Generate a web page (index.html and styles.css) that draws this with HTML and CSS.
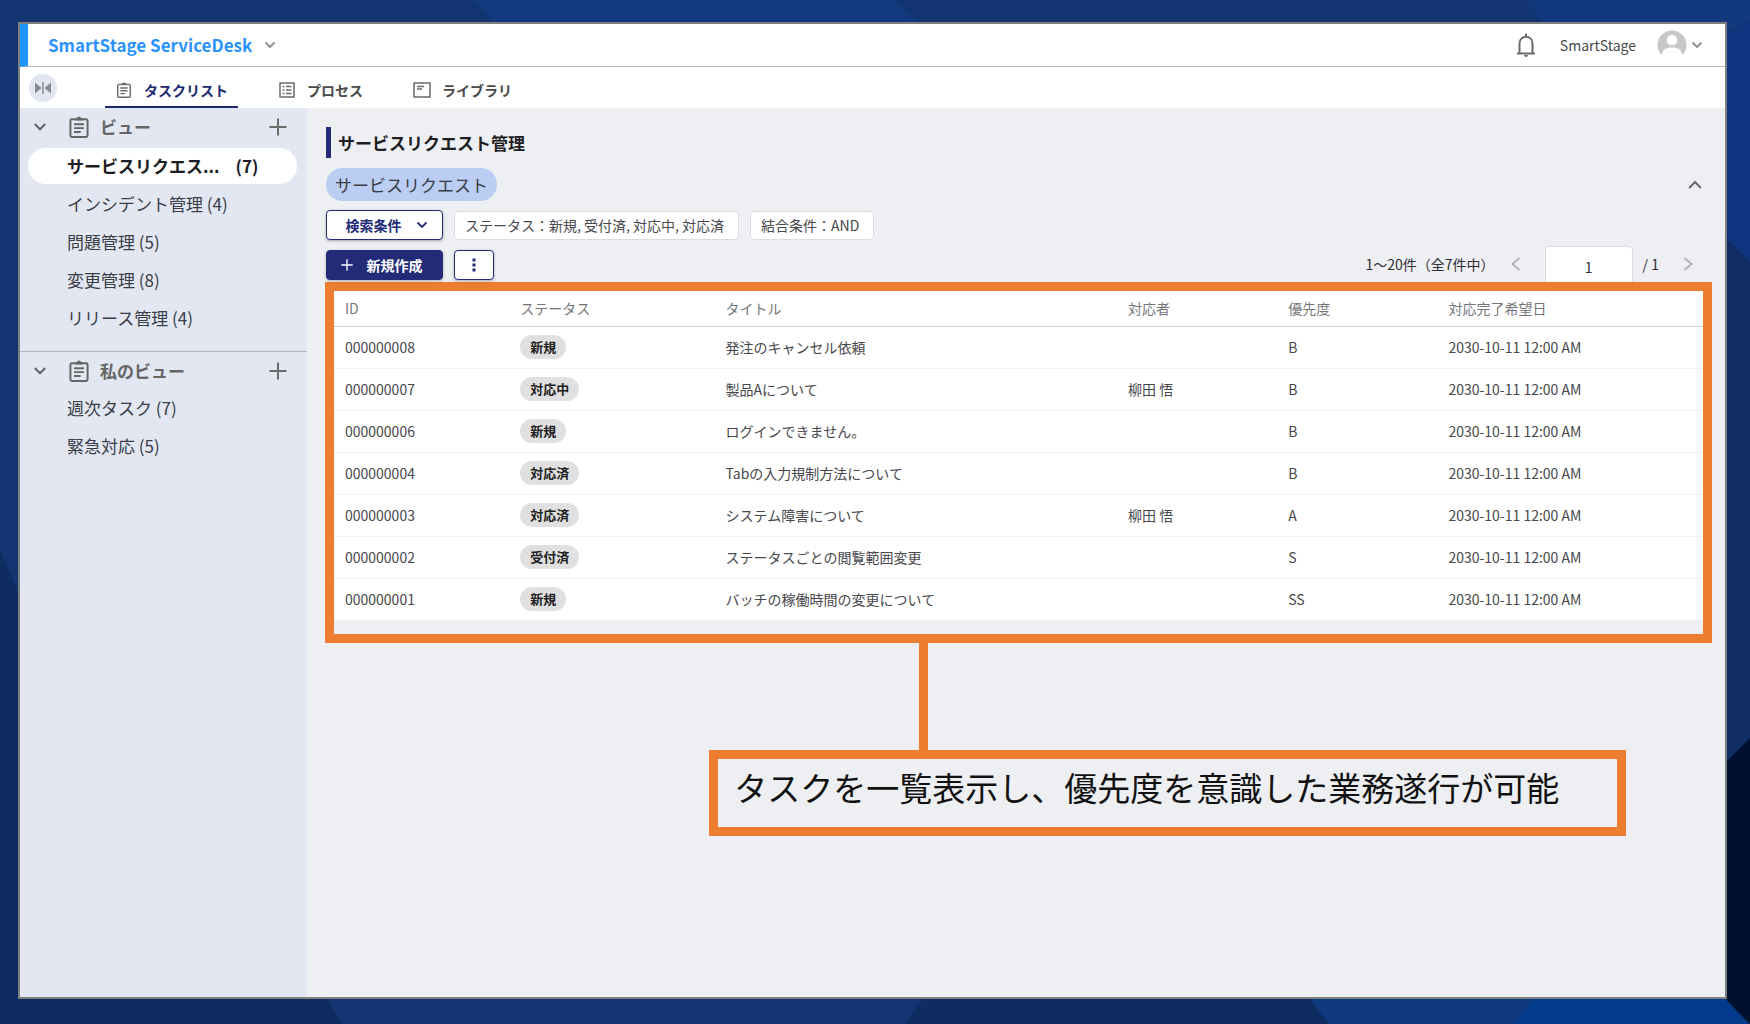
FILE: index.html
```html
<!DOCTYPE html>
<html lang="ja">
<head>
<meta charset="utf-8">
<meta name="viewport" content="width=device-width, initial-scale=1">
<title>SmartStage ServiceDesk</title>
<link rel="stylesheet" href="styles.css">
</head>
<body>
<svg class="backdrop" viewBox="0 0 1750 1024" preserveAspectRatio="none" aria-hidden="true">
  <rect width="1750" height="1024" fill="#123471"/>
  <path d="M475 0H895L925 30H500Z" fill="#123a7e"/>
  <path d="M1525 0H1750V30H1550Z" fill="#12397e"/>
  <path d="M1720 40L1750 20V262L1720 232Z" fill="#10347f"/>
  <path d="M1720 232L1750 262V740L1720 768Z" fill="#0f2d62"/>
  <path d="M1720 768L1750 738V1024L1720 994Z" fill="#001130"/>
  <path d="M0 550L30 620V990H322L342 1024H0Z" fill="#0f2c61"/>
  <path d="M926 995H1306L1330 1024H906Z" fill="#0f2c61"/>
  <path d="M1306 995H1536L1514 1024H1330Z" fill="#103a7f"/>
  <path d="M1536 995H1722L1748 1024H1514Z" fill="#023a8c"/>
</svg>
<svg class="sprite" aria-hidden="true">
  <symbol id="down" viewBox="0 0 12 12"><path d="M1.500 3.500L6 8L10.500 3.500" fill="none" stroke="currentColor" stroke-width="1.800"/></symbol>
  <symbol id="up" viewBox="0 0 12 12"><path d="M1 8.500L6 3.500L11 8.500" fill="none" stroke="currentColor" stroke-width="1.800"/></symbol>
  <symbol id="left" viewBox="0 0 14 14"><path d="M10.500 1L3.500 7L10.500 13" fill="none" stroke="currentColor" stroke-width="2"/></symbol>
  <symbol id="right" viewBox="0 0 14 14"><path d="M3.500 1L10.500 7L3.500 13" fill="none" stroke="currentColor" stroke-width="2"/></symbol>
  <symbol id="plus" viewBox="0 0 18 18"><path d="M9 0.500V17.500M0.500 9H17.500" fill="none" stroke="currentColor" stroke-width="2"/></symbol>
  <symbol id="clipboard" viewBox="0 0 18 20"><path d="M2.500 3H15.500A1.300 1.300 0 0 1 16.800 4.300V17.700A1.300 1.300 0 0 1 15.500 19H2.500A1.300 1.300 0 0 1 1.200 17.700V4.300A1.300 1.300 0 0 1 2.500 3Z" fill="none" stroke="currentColor" stroke-width="1.800"/><path d="M5.500 2H7A2.100 2.100 0 0 1 11 2H12.500V4H5.500Z" fill="currentColor"/><path d="M4.500 7.500H13.500M4.500 11H13.500M4.500 14.500H10.500" stroke="currentColor" stroke-width="1.700"/></symbol>
  <symbol id="list" viewBox="0 0 16 16"><path d="M1 1H15V15H1Z" fill="none" stroke="currentColor" stroke-width="1.500" stroke-linejoin="round"/><path d="M3.500 4.500H5.500M7 4.500H12.500M3.500 8H5.500M7 8H12.500M3.500 11.500H5.500M7 11.500H12.500" stroke="currentColor" stroke-width="1.500"/></symbol>
  <symbol id="reader" viewBox="0 0 18 16"><path d="M1 1H17V15H1Z" fill="none" stroke="currentColor" stroke-width="1.500" stroke-linejoin="round"/><path d="M4 4.500H11M4 7H9" stroke="currentColor" stroke-width="1.500"/></symbol>
</svg>
<div class="window">
  <header class="topbar">
    <button class="product" type="button">SmartStage ServiceDesk <svg class="ic-12"><use href="#down"/></svg></button>
    <div class="account">
      <button class="plain" type="button" aria-label="通知">
        <svg class="bell" viewBox="0 0 20 24" fill="none" stroke="currentColor" stroke-width="2"><path d="M1 20.500H19M3.500 20V10.500C3.500 6.500 6.200 3.800 10 3.800S16.500 6.500 16.500 10.500V20M10 0.500V3.500"/><path d="M8 22A2 2 0 0 0 12 22Z" fill="currentColor" stroke="none"/></svg>
      </button>
      <span class="username">SmartStage</span>
      <button class="plain user" type="button" aria-label="アカウント">
        <svg class="avatar" viewBox="0 0 30 30"><path d="M5 25.500A14.500 14.500 0 1 1 25 25.500C25 20 21 17.500 15 17.500S5 20 5 25.500Z" fill="#c8c8c8"/><circle cx="15" cy="10" r="5.300" fill="#fff"/></svg>
        <svg class="ic-12"><use href="#down"/></svg>
      </button>
    </div>
  </header>
  <nav class="tabs">
    <button class="toggle" type="button" aria-label="サイドバー切替"><svg viewBox="0 0 18 14"><path d="M1 1.500L7.500 7L1 12.500ZM17 1.500L10.500 7L17 12.500ZM8.300 1H9.700V13H8.300Z" fill="#8a8a8c"/></svg></button>
    <a class="tab tab-on" href="#tasks"><svg class="ic-tab"><use href="#clipboard"/></svg>タスクリスト</a>
    <a class="tab" href="#process"><svg class="ic-tab"><use href="#list"/></svg>プロセス</a>
    <a class="tab" href="#library"><svg class="ic-tab"><use href="#reader"/></svg>ライブラリ</a>
  </nav>
  <div class="body">
    <aside class="side">
      <section class="group">
        <h2 class="group-head"><svg class="ic-14"><use href="#down"/></svg><svg class="ic-clip"><use href="#clipboard"/></svg><span class="group-name">ビュー</span><button class="plain" type="button" aria-label="ビューを追加"><svg class="ic-18"><use href="#plus"/></svg></button></h2>
        <ul class="views">
          <li><a class="view view-on" href="#v1"><span>サービスリクエス...</span><span>(7)</span></a></li>
          <li><a class="view" href="#v2">インシデント管理 (4)</a></li>
          <li><a class="view" href="#v3">問題管理 (5)</a></li>
          <li><a class="view" href="#v4">変更管理 (8)</a></li>
          <li><a class="view" href="#v5">リリース管理 (4)</a></li>
        </ul>
      </section>
      <section class="group">
        <h2 class="group-head"><svg class="ic-14"><use href="#down"/></svg><svg class="ic-clip"><use href="#clipboard"/></svg><span class="group-name">私のビュー</span><button class="plain" type="button" aria-label="私のビューを追加"><svg class="ic-18"><use href="#plus"/></svg></button></h2>
        <ul class="views">
          <li><a class="view" href="#m1">週次タスク (7)</a></li>
          <li><a class="view" href="#m2">緊急対応 (5)</a></li>
        </ul>
      </section>
    </aside>
    <main class="main">
      <h1 class="title">サービスリクエスト管理</h1>
      <div class="row category">
        <span class="pill">サービスリクエスト</span>
        <button class="plain" type="button" aria-label="折りたたむ"><svg class="ic-14"><use href="#up"/></svg></button>
      </div>
      <div class="row filters">
        <button class="btn" type="button">検索条件 <svg class="ic-12"><use href="#down"/></svg></button>
        <span class="chip">ステータス：新規, 受付済, 対応中, 対応済</span>
        <span class="chip">結合条件：AND</span>
      </div>
      <div class="row toolbar">
        <button class="btn btn-primary" type="button"><svg class="ic-12"><use href="#plus"/></svg> 新規作成</button>
        <button class="btn btn-more" type="button" aria-label="その他"><svg viewBox="0 0 4 14"><path d="M0.500 0.500H3.500V3.500H0.500ZM0.500 5.500H3.500V8.500H0.500ZM0.500 10.500H3.500V13.500H0.500Z" fill="currentColor"/></svg></button>
        <div class="pager">
          <span>1～20件（全7件中）</span>
          <button class="plain arrow" type="button" aria-label="前へ"><svg class="ic-14"><use href="#left"/></svg></button>
          <input class="page" type="text" value="1" aria-label="ページ">
          <span>/ 1</span>
          <button class="plain arrow" type="button" aria-label="次へ"><svg class="ic-14"><use href="#right"/></svg></button>
        </div>
      </div>
      <div class="frame">
        <table class="tasks">
          <colgroup><col class="c-id"><col class="c-status"><col class="c-title"><col class="c-owner"><col class="c-prio"><col></colgroup>
          <thead><tr><th>ID</th><th>ステータス</th><th>タイトル</th><th>対応者</th><th>優先度</th><th>対応完了希望日</th></tr></thead>
          <tbody>
            <tr><td>000000008</td><td><span class="badge">新規</span></td><td>発注のキャンセル依頼</td><td></td><td>B</td><td>2030-10-11 12:00 AM</td></tr>
            <tr><td>000000007</td><td><span class="badge">対応中</span></td><td>製品Aについて</td><td>柳田 悟</td><td>B</td><td>2030-10-11 12:00 AM</td></tr>
            <tr><td>000000006</td><td><span class="badge">新規</span></td><td>ログインできません。</td><td></td><td>B</td><td>2030-10-11 12:00 AM</td></tr>
            <tr><td>000000004</td><td><span class="badge">対応済</span></td><td>Tabの入力規制方法について</td><td></td><td>B</td><td>2030-10-11 12:00 AM</td></tr>
            <tr><td>000000003</td><td><span class="badge">対応済</span></td><td>システム障害について</td><td>柳田 悟</td><td>A</td><td>2030-10-11 12:00 AM</td></tr>
            <tr><td>000000002</td><td><span class="badge">受付済</span></td><td>ステータスごとの閲覧範囲変更</td><td></td><td>S</td><td>2030-10-11 12:00 AM</td></tr>
            <tr><td>000000001</td><td><span class="badge">新規</span></td><td>バッチの稼働時間の変更について</td><td></td><td>SS</td><td>2030-10-11 12:00 AM</td></tr>
          </tbody>
        </table>
      </div>
      <div class="connector"></div>
      <p class="callout">タスクを一覧表示し、優先度を意識した業務遂行が可能</p>
    </main>
  </div>
</div>
</body>
</html>
```
FILE: styles.css
```css
* { box-sizing: border-box; }

body {
  margin: 0;
  min-height: 100vh;
  display: flex;
  padding: 22px 23px 25px 18px;
  background: #123471;
  color: #47474c;
  font: 14px/20px "Noto Sans CJK JP", sans-serif;
}

h1, h2, ul, p { margin: 0; padding: 0; }
ul { list-style: none; }
a { color: inherit; text-decoration: none; }
svg { display: block; flex: none; }

button, input { font: inherit; color: inherit; }
button { cursor: pointer; }

.backdrop { position: fixed; inset: 0; width: 100%; height: 100%; z-index: -1; }
.sprite { position: absolute; width: 0; height: 0; }

.ic-12 { width: 12px; height: 12px; }
.ic-14 { width: 14px; height: 14px; }
.ic-18 { width: 18px; height: 18px; }
.ic-tab { width: 18px; height: 16px; }
.ic-clip { width: 20px; height: 22px; }

.plain { display: flex; align-items: center; padding: 0; border: 0; background: none; color: #6b6b6b; }

.window {
  flex: 1;
  min-width: 0;
  display: flex;
  flex-direction: column;
  border: 2px solid #7f7f7f;
  background: #edeff3;
}

/* Header */
.topbar {
  display: flex;
  align-items: center;
  justify-content: space-between;
  height: 43px;
  padding: 0 22px 0 20px;
  border-left: 8px solid #1e98ff;
  border-bottom: 1px solid #b9b9b9;
  background: #fff;
}
.product {
  display: flex;
  align-items: center;
  gap: 12px;
  padding: 0;
  border: 0;
  background: none;
  color: #2a93fb;
  font-size: 17px;
  font-weight: 700;
}
.product svg { color: #8c8c8c; }
.account { display: flex; align-items: center; }
.bell { width: 20px; height: 24px; }
.username { margin: 0 21px 0 24px; }
.user { gap: 4px; }
.user .ic-12 { color: #8c8c8c; }
.avatar { width: 30px; height: 30px; }

/* Tabs */
.tabs { display: flex; align-items: stretch; height: 41px; padding-left: 9px; background: #fff; }
.toggle {
  display: grid;
  place-items: center;
  width: 28px;
  height: 28px;
  margin: 7px 48px 0 0;
  padding: 0;
  border: 0;
  border-radius: 50%;
  background: #e2e6f1;
}
.toggle svg { width: 18px; height: 14px; }
.tab {
  display: flex;
  align-items: center;
  gap: 11px;
  margin-right: 30px;
  padding: 8px 10px 2px;
  border-bottom: 2px solid transparent;
  color: #4a4a4a;
  font-weight: 700;
}
.tab svg { color: #6b6b6b; }
.tab-on { color: #20286f; border-color: #20286f; }

.body { flex: 1; display: flex; }

/* Sidebar */
.side { flex: none; width: 287px; background: #e2e7f2; color: #3a3d46; font-size: 17px; }
.group + .group { border-top: 1px solid #b4b6bc; }
.group:first-child { height: 243px; }
.group-head {
  display: flex;
  align-items: center;
  height: 38px;
  padding: 0 20px 0 13px;
  color: #666;
  font-size: 17px;
  font-weight: 700;
}
.group-head .ic-clip { margin: 0 11px 0 22px; }
.group-name { flex: 1; }
.views { display: grid; gap: 2px; padding: 2px 10px 0 8px; }
.group + .group .views { padding-top: 0; }
.view { display: flex; gap: 16px; align-items: center; height: 36px; padding-left: 39px; border-radius: 18px; }
.view-on { background: #fff; color: #1c1c24; font-weight: 700; }

/* Content */
.main { flex: 1; min-width: 0; padding: 19px 13px 40px 18px; }
.title {
  height: 31px;
  margin-left: 1px;
  padding: 0 0 0 7px;
  border-left: 5px solid #232a78;
  color: #1e1e22;
  font-size: 17px;
  font-weight: 700;
  line-height: 32px;
}
.row { display: flex; align-items: center; gap: 11px; padding-left: 1px; }
.category { justify-content: space-between; margin-top: 10px; padding-right: 10px; }
.pill { padding: 0 9px; border-radius: 17px; background: #b9cef2; color: #3a3d46; font-size: 17px; line-height: 33px; }
.filters { margin-top: 9px; }
.btn {
  display: flex;
  align-items: center;
  justify-content: center;
  gap: 14px;
  width: 117px;
  height: 30px;
  padding: 0;
  border: 1px solid #232a78;
  border-radius: 4px;
  background: #fff;
  box-shadow: 0 1px 3px rgba(0, 0, 0, .3);
  color: #232a78;
  font-weight: 700;
}
.filters .btn { padding-left: 4px; }
.btn-primary { padding-right: 6px; background: #232a78; color: #fff; }
.btn-more { width: 40px; }
.btn-more svg { width: 4px; height: 14px; }
.chip { padding: 0 14px 0 10px; border: 1px solid #dcdce0; border-radius: 4px; background: #fff; line-height: 27px; }

.toolbar { align-items: flex-start; height: 42px; padding-top: 10px; }
.pager { display: flex; align-items: center; margin: -4px 17px 0 auto; color: #2e2e33; }
.arrow { color: #b4b4b6; margin: 0 22px 0 14px; }
.pager .arrow:last-child { margin: 0 0 0 22px; }
.page {
  width: 88px;
  height: 36px;
  margin-right: 10px;
  padding: 4px 0 0;
  border: 1px solid #dcdce0;
  border-bottom: 0;
  border-radius: 4px 4px 0 0;
  background: #fff;
  text-align: center;
}

.frame { padding-bottom: 13px; border: 9px solid #ed7d31; }
.tasks { width: 100%; table-layout: fixed; border-collapse: collapse; background: #fff; }
.tasks th, .tasks td { padding: 0 0 0 11px; text-align: left; }
.tasks th { height: 35px; border-bottom: 1px solid #d0d0d2; color: #76767a; font-weight: 400; }
.tasks td { height: 42px; border-bottom: 1px solid #f2f2f4; }
.c-id { width: 12.8%; }
.c-status { width: 15%; }
.c-title { width: 29.4%; }
.c-owner { width: 11.7%; }
.c-prio { width: 11.7%; }
.badge {
  display: inline-block;
  padding: 0 10px;
  border-radius: 12px;
  background: #e0e0e0;
  color: #222;
  font-size: 13px;
  font-weight: 700;
  line-height: 24px;
  vertical-align: middle;
}

.connector { width: 9px; height: 107px; margin-left: 42.8%; background: #ed7d31; }
.callout {
  width: 66.1%;
  min-height: 86px;
  margin-left: 27.7%;
  padding: 4px 16px;
  border: 9px solid #ed7d31;
  color: #111;
  font-size: 33px;
  line-height: 48px;
  white-space: nowrap;
}
```
